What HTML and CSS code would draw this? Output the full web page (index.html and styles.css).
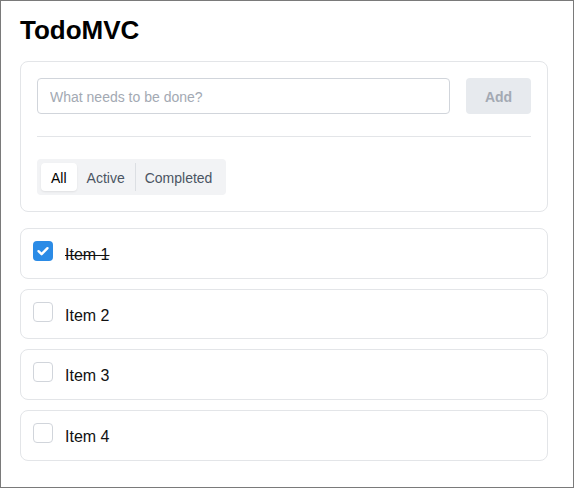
FILE: index.html
```html
<!DOCTYPE html>
<html>
<head>
<meta charset="utf-8">
<link rel="stylesheet" href="styles.css">
</head>
<body>
<div class="frame">
  <h1 class="title">TodoMVC</h1>
  <section class="panel">
    <div class="entry">
      <input class="entry-input" type="text" placeholder="What needs to be done?">
      <button class="entry-add">Add</button>
    </div>
    <hr class="divider">
    <div class="filters">
      <button class="filter filter-active">All</button>
      <button class="filter">Active</button>
      <button class="filter filter-sep">Completed</button>
    </div>
  </section>
  <ul class="list">
    <li class="item">
      <span class="check check-on">
        <svg viewBox="0 0 20 20" width="20" height="20"><path d="M5.5 10.2 L8.6 13.2 L14.5 7.2" fill="none" stroke="#fff" stroke-width="2.4" stroke-linecap="round" stroke-linejoin="round"/></svg>
      </span>
      <span class="label label-done">Item 1</span>
    </li>
    <li class="item">
      <span class="check"></span>
      <span class="label">Item 2</span>
    </li>
    <li class="item">
      <span class="check"></span>
      <span class="label">Item 3</span>
    </li>
    <li class="item">
      <span class="check"></span>
      <span class="label">Item 4</span>
    </li>
  </ul>
</div>
</body>
</html>
```
FILE: styles.css
```css
html, body {
  margin: 0;
  padding: 0;
  background: #fff;
}
body {
  font-family: "Liberation Sans", Arial, sans-serif;
  color: #111;
}
.frame {
  box-sizing: border-box;
  width: 574px;
  height: 488px;
  border: 1px solid #7a7a7a;
  padding: 15px 19px 0;
  overflow: hidden;
}
.title {
  margin: 0 0 16px;
  font-size: 26px;
  line-height: 29px;
  font-weight: 700;
  color: #000;
}
.panel {
  box-sizing: border-box;
  width: 528px;
  border: 1px solid #e3e5e8;
  border-radius: 8px;
  padding: 16px;
}
.entry {
  display: flex;
  gap: 16px;
}
.entry-input {
  flex: 1;
  box-sizing: border-box;
  height: 36px;
  margin: 0;
  padding: 1px 12px 0;
  border: 1px solid #d1d5db;
  border-radius: 4px;
  font-family: inherit;
  font-size: 14px;
  color: #111;
  outline: none;
}
.entry-input::placeholder {
  color: #a3a9b3;
}
.entry-add {
  box-sizing: border-box;
  width: 65px;
  height: 36px;
  margin: 0;
  padding: 2px 0 0;
  border: none;
  border-radius: 4px;
  background: #e7eaee;
  color: #a3a9b3;
  font-family: inherit;
  font-size: 14px;
  font-weight: 700;
}
.divider {
  margin: 22px 0;
  border: none;
  border-top: 1px solid #e3e5e8;
  height: 0;
}
.filters {
  display: inline-flex;
  padding: 4px;
  background: #f2f3f5;
  border-radius: 4px;
}
.filter {
  box-sizing: border-box;
  height: 28px;
  margin: 0;
  padding: 2px 10px 0;
  border: none;
  background: transparent;
  font-family: inherit;
  font-size: 14px;
  color: #4b5563;
  border-radius: 4px;
}
.filter-active {
  background: #fff;
  color: #000;
  box-shadow: 0 1px 2px rgba(0, 0, 0, 0.08);
}
.filter-sep {
  border-left: 1px solid #dcdfe3;
  border-radius: 0;
  padding-left: 9px;
}
.list {
  list-style: none;
  margin: 16px 0 0;
  padding: 0;
  width: 528px;
  display: flex;
  flex-direction: column;
  gap: 10px;
}
.item {
  box-sizing: border-box;
  height: 50.67px;
  display: flex;
  align-items: flex-start;
  gap: 12px;
  padding: 12px 12px 0;
  border: 1px solid #e3e5e8;
  border-radius: 8px;
  background: #fff;
}
.check {
  box-sizing: border-box;
  width: 20px;
  height: 20px;
  border: 1px solid #d1d5db;
  border-radius: 4px;
  flex: none;
  display: block;
}
.check svg {
  display: block;
}
.check-on {
  border: none;
  background: #2b8be6;
}
.label {
  font-size: 16px;
  line-height: 28px;
  color: #111;
}
.label-done {
  text-decoration: line-through;
}
```
